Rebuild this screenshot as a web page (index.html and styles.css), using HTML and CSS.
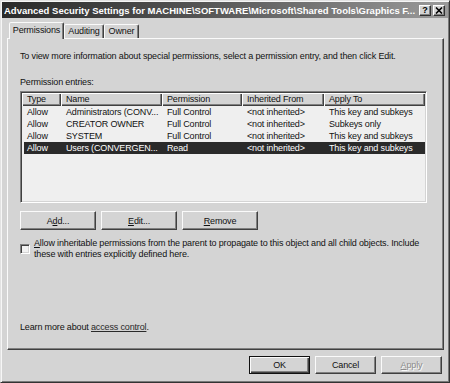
FILE: index.html
```html
<!DOCTYPE html>
<html>
<head>
<meta charset="utf-8">
<link rel="stylesheet" href="styles.css">
</head>
<body>
<div class="window">
  <div class="titlebar">
    <span class="title">Advanced Security Settings for MACHINE\SOFTWARE\Microsoft\Shared Tools\Graphics F...</span>
    <div class="tb-buttons">
      <span class="tbbtn q">?</span>
      <span class="tbbtn"><svg width="8" height="7" viewBox="0 0 8 7"><path d="M1 0.5 L7 6.5 M7 0.5 L1 6.5" stroke="#000" stroke-width="1.6" fill="none"/></svg></span>
    </div>
  </div>
  <div class="main">
    <div class="tabs">
      <div class="tab active">Permissions</div>
      <div class="tab t-aud">Auditing</div>
      <div class="tab t-own">Owner</div>
    </div>
    <div class="panel">
      <p class="intro">To view more information about special permissions, select a permission entry, and then click Edit.</p>
      <div class="label">Permission entries:</div>
      <div class="listbox">
        <div class="hdr">
          <div class="hc">Type</div>
          <div class="hc">Name</div>
          <div class="hc">Permission</div>
          <div class="hc">Inherited From</div>
          <div class="hc">Apply To</div>
        </div>
        <div class="row">
          <div class="c">Allow</div><div class="c">Administrators (CONV...</div><div class="c">Full Control</div><div class="c">&lt;not inherited&gt;</div><div class="c">This key and subkeys</div>
        </div>
        <div class="row">
          <div class="c">Allow</div><div class="c">CREATOR OWNER</div><div class="c">Full Control</div><div class="c">&lt;not inherited&gt;</div><div class="c">Subkeys only</div>
        </div>
        <div class="row">
          <div class="c">Allow</div><div class="c">SYSTEM</div><div class="c">Full Control</div><div class="c">&lt;not inherited&gt;</div><div class="c">This key and subkeys</div>
        </div>
        <div class="row sel">
          <div class="c">Allow</div><div class="c">Users (CONVERGEN...</div><div class="c">Read</div><div class="c">&lt;not inherited&gt;</div><div class="c">This key and subkeys</div>
        </div>
      </div>
      <div class="btnrow">
        <div class="btn wide">A<u>d</u>d...</div>
        <div class="btn wide"><u>E</u>dit...</div>
        <div class="btn wide"><u>R</u>emove</div>
      </div>
      <div class="check">
        <span class="box"></span>
        <span class="checktext"><u>A</u>llow inheritable permissions from the parent to propagate to this object and all child objects. Include<br>these with entries explicitly defined here.</span>
      </div>
      <p class="learn">Learn more about <span class="link">access control</span>.</p>
    </div>
    <div class="footer">
      <div class="btn foot default">OK</div>
      <div class="btn foot">Cancel</div>
      <div class="btn foot disabled"><u>A</u>pply</div>
    </div>
  </div>
</div>
</body>
</html>
```
FILE: styles.css
```css
html, body {
  margin: 0;
  padding: 0;
  background: #d4d4d4;
}
body {
  font-family: "Liberation Sans", Arial, sans-serif;
  font-size: 9px;
  letter-spacing: -0.15px;
  color: #111;
}
.window {
  width: 450px;
  height: 383px;
  box-sizing: border-box;
  border: 1px solid;
  border-color: #e2e2e2 #333 #333 #e2e2e2;
  box-shadow: inset 1px 1px 0 #f6f6f6, inset -1px -1px 0 #7a7a7a;
  padding: 1px;
  display: flex;
  flex-direction: column;
  background: #d4d4d4;
}
.titlebar {
  height: 16px;
  flex: none;
  display: flex;
  align-items: center;
  padding: 0 3px 0 2px;
  background: linear-gradient(90deg, #2a2a2a 0%, #555 45%, #9a9a9a 100%);
  color: #fff;
}
.title {
  flex: 1;
  min-width: 0;
  margin-right: 1px;
  font-weight: bold;
  font-size: 9.5px;
  letter-spacing: 0;
  white-space: nowrap;
  overflow: hidden;
}
.tb-buttons {
  display: flex;
  flex: none;
  gap: 2px;
}
.tbbtn {
  width: 12px;
  height: 11px;
  box-sizing: border-box;
  background: #d4d4d4;
  border: 1px solid;
  border-color: #fff #303030 #303030 #fff;
  box-shadow: inset -1px -1px 0 #808080;
  display: flex;
  align-items: center;
  justify-content: center;
  color: #000;
  font-weight: bold;
  font-size: 9px;
  line-height: 9px;
  letter-spacing: 0;
}
.main {
  flex: 1;
  display: flex;
  flex-direction: column;
  padding: 4px 4px 0 5px;
}
.tabs {
  height: 16px;
  display: flex;
  align-items: flex-end;
  flex: none;
  position: relative;
  z-index: 1;
}
.tab {
  height: 14px;
  box-sizing: border-box;
  border: 1px solid;
  border-bottom: none;
  border-color: #fafafa #404040 transparent #fafafa;
  box-shadow: inset -1px 0 0 #808080;
  border-radius: 2px 2px 0 0;
  background: #d4d4d4;
  text-align: center;
  line-height: 12px;
}
.tab.active {
  height: 17px;
  margin-left: 2px;
  margin-bottom: -1px;
  width: 55px;
  line-height: 14px;
}
.t-aud { width: 40px; }
.t-own { width: 35px; }
.panel {
  height: 312px;
  flex: none;
  box-sizing: border-box;
  border: 1px solid;
  border-color: #fafafa #404040 #404040 #fafafa;
  box-shadow: inset -1px -1px 0 #808080;
  padding: 0 12px 16px 12px;
  display: flex;
  flex-direction: column;
}
.intro {
  margin: 12px 0 0;
  line-height: 11px;
  white-space: nowrap;
}
.label {
  margin-top: 15px;
  line-height: 11px;
}
.listbox {
  margin-top: 3px;
  width: 407px;
  height: 112px;
  box-sizing: border-box;
  border: 1px solid;
  border-color: #808080 #fff #fff #808080;
  box-shadow: inset 1px 1px 0 #404040, inset -1px -1px 0 #d4d4d4;
  padding: 1px;
  background: #efefef;
}
.hdr, .row {
  display: grid;
  grid-template-columns: 39px 101px 80px 82px 101px;
}
.hc {
  height: 13px;
  line-height: 13px;
  padding-left: 5px;
  background: #d4d4d4;
  box-shadow: inset 1px 1px 0 #fff, inset -1px -1px 0 #404040, inset -2px -2px 0 #808080;
  white-space: nowrap;
  overflow: hidden;
}
.row {
  height: 12px;
  line-height: 12px;
}
.c {
  padding-left: 5px;
  white-space: nowrap;
  overflow: hidden;
}
.row.sel {
  background: linear-gradient(90deg, transparent 2px, #2a2a2a 2px);
  color: #fff;
}
.btnrow {
  margin-top: 8px;
  display: flex;
  gap: 5px;
}
.btn {
  height: 19px;
  box-sizing: border-box;
  background: #d4d4d4;
  border: 1px solid;
  border-color: #fafafa #404040 #404040 #fafafa;
  box-shadow: inset -1px -1px 0 #808080;
  display: flex;
  align-items: center;
  justify-content: center;
  color: #111;
}
.btn.wide { width: 76px; }
.check {
  margin-top: 8px;
  display: flex;
  align-items: center;
  gap: 4px;
}
.box {
  width: 10px;
  height: 10px;
  box-sizing: border-box;
  flex: none;
  background: #f2f2f2;
  border: 1px solid;
  border-color: #808080 #fff #fff #808080;
  box-shadow: inset 1px 1px 0 #404040, inset -1px -1px 0 #d4d4d4;
}
.checktext {
  line-height: 11px;
  white-space: nowrap;
}
.learn {
  margin: auto 0 0;
  line-height: 11px;
}
.link {
  text-decoration: underline;
  color: #2a2a2a;
}
.footer {
  margin-top: 6px;
  display: flex;
  justify-content: flex-end;
  gap: 5px;
  padding-right: 2px;
}
.btn.foot {
  width: 61px;
  height: 18px;
}
.btn.default {
  border: 1px solid #111;
  box-shadow: inset 1px 1px 0 #fafafa, inset -1px -1px 0 #404040, inset -2px -2px 0 #808080;
}
.btn.disabled {
  color: #8c8c8c;
  text-shadow: 1px 1px 0 #fafafa;
}
```
